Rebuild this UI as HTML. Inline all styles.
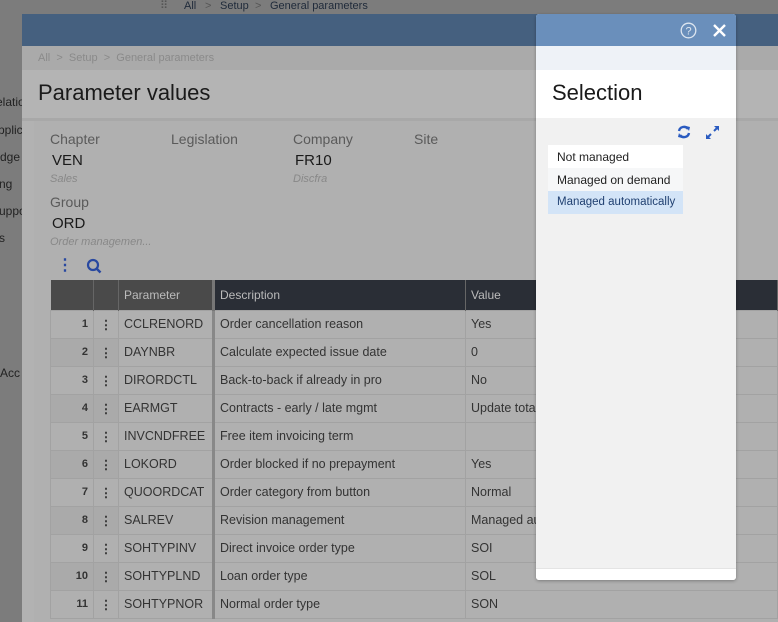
<!DOCTYPE html><html><head><style>
*{margin:0;padding:0;box-sizing:border-box}
body{width:778px;height:622px;overflow:hidden;background:#7c7c7c;font-family:"Liberation Sans",sans-serif;position:relative}
.a{position:absolute}
.lbl{color:#5a5a5a;font-size:14px}
.val{color:#1a1a1a;font-size:15px}
.sub{color:#888;font-size:11px;font-style:italic}
.lt{position:absolute;font-size:12px;color:#222;white-space:nowrap}
table{border-collapse:collapse;position:absolute;left:50px;top:280px;width:728px;font-size:12.5px}
td{height:28px;border:1px solid #a2a2a2;color:#333;padding:0 5px;white-space:nowrap;overflow:hidden}
th{height:30px;text-align:left;font-weight:normal;font-size:12px;padding:0 5px;color:#bbb;border-right:1px solid #666}
</style></head><body>
<div class="a" style="left:0;top:0;width:778px;height:14px;font-size:11px;color:#1f2a3a">
<span class="a" style="left:160px;top:-1px;color:#555">⠿</span>
<span class="a" style="left:184px;top:0">All</span><span class="a" style="left:205px;top:0;color:#555">&gt;</span>
<span class="a" style="left:220px;top:0">Setup</span><span class="a" style="left:255px;top:0;color:#555">&gt;</span>
<span class="a" style="left:270px;top:0">General parameters</span></div>
<span class="lt" style="left:-4px;top:95px">elation</span>
<span class="lt" style="left:-2px;top:123px">pplic</span>
<span class="lt" style="left:0px;top:150px">dge</span>
<span class="lt" style="left:-1px;top:177px">ng</span>
<span class="lt" style="left:-1px;top:204px">uppo</span>
<span class="lt" style="left:-1px;top:231px">s</span>
<span class="lt" style="left:0px;top:366px">Acc</span>
<div class="a" style="left:22px;top:14px;width:756px;height:608px;background:#b2b2b2">
<div class="a" style="left:0;top:0;width:756px;height:32px;background:#45607f"></div>
<div class="a" style="left:0;top:32px;width:756px;height:24px;background:#aaaaaa;font-size:11px;color:#8a8a8a">
<span class="a" style="left:16px;top:6px">All &nbsp;&gt;&nbsp; Setup &nbsp;&gt;&nbsp; General parameters</span></div>
<div class="a" style="left:0;top:56px;width:756px;height:48px;background:#b4b4b4;font-size:22px;color:#1a1a1a"><span class="a" style="left:16px;top:10px">Parameter values</span></div>
<div class="a" style="left:0;top:104px;width:756px;height:3px;background:#a8a8a8"></div>
</div>
<div class="a" style="left:34px;top:121px;width:744px;height:501px;background:#b0b0b0"></div>
<div class="a lbl" style="left:50px;top:131px">Chapter</div>
<div class="a lbl" style="left:171px;top:131px">Legislation</div>
<div class="a lbl" style="left:293px;top:131px">Company</div>
<div class="a lbl" style="left:414px;top:131px">Site</div>
<div class="a val" style="left:52px;top:152px">VEN</div>
<div class="a val" style="left:295px;top:152px">FR10</div>
<div class="a sub" style="left:50px;top:173px">Sales</div>
<div class="a sub" style="left:293px;top:173px">Discfra</div>
<div class="a lbl" style="left:50px;top:194px">Group</div>
<div class="a val" style="left:52px;top:215px">ORD</div>
<div class="a sub" style="left:50px;top:236px">Order managemen...</div>
<div class="a" style="left:57px;top:258px;color:#2848a0;font-size:16px;font-weight:bold;line-height:16px">⋮</div>
<svg class="a" style="left:86px;top:258px" width="16" height="16"><circle cx="7" cy="7" r="5" fill="none" stroke="#2848a0" stroke-width="2.2"/><path d="M10.5 10.5L14.5 14.5" stroke="#2848a0" stroke-width="2.5"/></svg>
<table>
<tr><th style="background:#4a4a4a;width:43px"></th><th style="background:#4a4a4a;width:25px"></th><th style="background:#4a4a4a;width:95px;border-right:3px solid #777">Parameter</th><th style="background:#2a2e36;width:252px">Description</th><th style="background:#2a2e36">Value</th></tr>
<tr><td style="text-align:right;font-weight:bold;font-size:11px">1</td><td style="text-align:center;font-weight:bold">⋮</td><td style="border-right:3px solid #888">CCLRENORD</td><td>Order cancellation reason</td><td>Yes</td></tr>
<tr style="background:#aaa"><td style="text-align:right;font-weight:bold;font-size:11px">2</td><td style="text-align:center;font-weight:bold">⋮</td><td style="border-right:3px solid #888;background:#b0b0b0">DAYNBR</td><td style="background:#b0b0b0">Calculate expected issue date</td><td style="background:#b0b0b0">0</td></tr>
<tr><td style="text-align:right;font-weight:bold;font-size:11px">3</td><td style="text-align:center;font-weight:bold">⋮</td><td style="border-right:3px solid #888">DIRORDCTL</td><td>Back-to-back if already in pro</td><td>No</td></tr>
<tr style="background:#aaa"><td style="text-align:right;font-weight:bold;font-size:11px">4</td><td style="text-align:center;font-weight:bold">⋮</td><td style="border-right:3px solid #888;background:#b0b0b0">EARMGT</td><td style="background:#b0b0b0">Contracts - early / late mgmt</td><td style="background:#b0b0b0">Update total</td></tr>
<tr><td style="text-align:right;font-weight:bold;font-size:11px">5</td><td style="text-align:center;font-weight:bold">⋮</td><td style="border-right:3px solid #888">INVCNDFREE</td><td>Free item invoicing term</td><td></td></tr>
<tr style="background:#aaa"><td style="text-align:right;font-weight:bold;font-size:11px">6</td><td style="text-align:center;font-weight:bold">⋮</td><td style="border-right:3px solid #888;background:#b0b0b0">LOKORD</td><td style="background:#b0b0b0">Order blocked if no prepayment</td><td style="background:#b0b0b0">Yes</td></tr>
<tr><td style="text-align:right;font-weight:bold;font-size:11px">7</td><td style="text-align:center;font-weight:bold">⋮</td><td style="border-right:3px solid #888">QUOORDCAT</td><td>Order category from button</td><td>Normal</td></tr>
<tr style="background:#aaa"><td style="text-align:right;font-weight:bold;font-size:11px">8</td><td style="text-align:center;font-weight:bold">⋮</td><td style="border-right:3px solid #888;background:#b0b0b0">SALREV</td><td style="background:#b0b0b0">Revision management</td><td style="background:#b0b0b0">Managed aut</td></tr>
<tr><td style="text-align:right;font-weight:bold;font-size:11px">9</td><td style="text-align:center;font-weight:bold">⋮</td><td style="border-right:3px solid #888">SOHTYPINV</td><td>Direct invoice order type</td><td>SOI</td></tr>
<tr style="background:#aaa"><td style="text-align:right;font-weight:bold;font-size:11px">10</td><td style="text-align:center;font-weight:bold">⋮</td><td style="border-right:3px solid #888;background:#b0b0b0">SOHTYPLND</td><td style="background:#b0b0b0">Loan order type</td><td style="background:#b0b0b0">SOL</td></tr>
<tr><td style="text-align:right;font-weight:bold;font-size:11px">11</td><td style="text-align:center;font-weight:bold">⋮</td><td style="border-right:3px solid #888">SOHTYPNOR</td><td>Normal order type</td><td>SON</td></tr>
</table>
<div class="a" style="left:536px;top:14px;width:200px;height:566px;background:#f1f1f1;border-radius:3px;overflow:hidden;box-shadow:0 1px 3px rgba(0,0,0,.3)">
<div class="a" style="left:0;top:0;width:200px;height:32px;background:#6a8fbb"></div>
<svg class="a" style="left:144px;top:8px" width="17" height="17"><circle cx="8.5" cy="8.5" r="7.3" fill="none" stroke="#dde6f0" stroke-width="1.3"/><text x="8.5" y="12.5" font-size="11" text-anchor="middle" fill="#dde6f0" font-family="Liberation Sans">?</text></svg>
<svg class="a" style="left:176px;top:9px" width="15" height="15"><path d="M2 2L13 13M13 2L2 13" stroke="#fff" stroke-width="2.4"/></svg>
<div class="a" style="left:0;top:32px;width:200px;height:24px;background:#eef2f7"></div>
<div class="a" style="left:0;top:56px;width:200px;height:48px;background:#fff;font-size:22px;color:#1a1a1a"><span class="a" style="left:16px;top:10px">Selection</span></div>
<svg class="a" style="left:141px;top:111px" width="14" height="14"><path d="M2 6A5 5 0 0 1 11 4M12 8A5 5 0 0 1 3 10" fill="none" stroke="#2a5bc0" stroke-width="2.4"/><path d="M9 1L13 2L12 6Z M5 13L1 12L2 8Z" fill="#2a5bc0"/></svg>
<svg class="a" style="left:169px;top:111px" width="15" height="15"><path d="M9 6L13 2M6 9L2 13" stroke="#2a5bc0" stroke-width="2"/><path d="M9 1H14V6Z M1 9V14H6Z" fill="#2a5bc0"/></svg>
<div class="a" style="left:12px;top:131px;width:135px;font-size:12px;color:#222;white-space:nowrap">
<div style="height:23px;background:#fff;padding:5px 9px">Not managed</div>
<div style="height:23px;background:#f6f7f8;padding:5px 9px">Managed on demand</div>
<div style="height:23px;background:#d3e4f7;padding:5px 9px;color:#1f3f70;font-size:11.5px">Managed automatically</div></div>
<div class="a" style="left:0;top:554px;width:200px;height:12px;background:#fff;border-top:1px solid #e4e4e4"></div>
</div>
</body></html>
